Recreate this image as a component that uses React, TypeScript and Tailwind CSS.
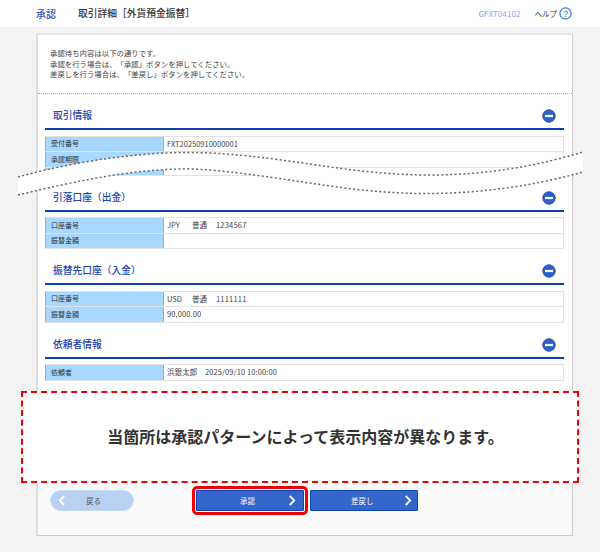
import React from "react";

const jp = "font-['Noto_Sans_CJK_JP','Noto_Sans',sans-serif] [text-spacing-trim:space-all]";

function Minus() {
  return (
    <svg width="14" height="14" viewBox="0 0 14 14" className="shrink-0 mt-[2px]">
      <circle cx="7" cy="7" r="6.2" fill="#2f62c4" stroke="#1a4dbb" strokeWidth="1" />
      <rect x="3" y="5.9" width="8" height="2.2" fill="#fff" />
    </svg>
  );
}

function Chevron({ left = false, color = "#fff" }: { left?: boolean; color?: string }) {
  return (
    <svg width="8" height="11" viewBox="0 0 8 11" className="shrink-0">
      <path d={left ? "M6.2 1 L1.8 5.5 L6.2 10" : "M1.8 1 L6.2 5.5 L1.8 10"} fill="none" stroke={color} strokeWidth="1.8" />
    </svg>
  );
}

function Account({ cur, no }: { cur: string; no: string }) {
  return (
    <>
      <span className="w-[25px]">{cur}</span>
      <span className="w-[24px]">普通</span>
      <span className="tracking-[0.2px]">{no}</span>
    </>
  );
}

function Row({ label, children }: { label: string; children?: React.ReactNode }) {
  return (
    <div className="flex h-[15.5px] border-t border-[#e2e2e2]">
      <div className="w-[118.5px] shrink-0 flex items-center bg-[#a9d8ff] border-l border-r border-[#7fb6e2] pl-[5px] pb-[1px] text-[7px] text-[#333]">
        {label}
      </div>
      <div className="flex-1 flex items-center pl-[3.5px] pb-[1px] text-[7.5px] text-[#444] whitespace-pre border-r border-[#e2e2e2]">
        {children}
      </div>
    </div>
  );
}

function Section({ title, clip = false, children }: { title: string; clip?: boolean; children: React.ReactNode }) {
  return (
    <section>
      <div className="h-[36px] pt-[8px] flex items-center justify-between border-b-2 border-[#0f3fb0] pl-[8px] pr-[8px]">
        <h2 className="text-[9.75px] font-medium text-[#1c46ae] leading-none pt-[2px]">{title}</h2>
        <Minus />
      </div>
      <div className={`mt-[5.5px] border-b border-[#e2e2e2] overflow-hidden ${clip ? "h-[40px]" : ""}`}>
        {children}
      </div>
    </section>
  );
}

export default function App() {
  return (
    <div className={`relative w-[600px] h-[552px] overflow-hidden bg-[#f3f3f3] ${jp}`}>
      <header className="h-[27px] bg-white flex items-center pl-[36px] pr-[28px]">
        <span className="w-[42px] text-[10px] font-medium text-[#2a56b8]">承認</span>
        <span className="text-[9.75px] font-medium text-[#333]">取引詳細［外貨預金振替］</span>
        <span className="ml-auto text-[8px] text-[#8aa8ea] tracking-[0.1px]">GFXT04102</span>
        <span className="ml-[14px] mr-[2px] text-[7.5px] text-[#333]">ヘルプ</span>
        <svg width="13" height="13" viewBox="0 0 13 13">
          <circle cx="6.5" cy="6.5" r="5.6" fill="#fff" stroke="#2a78dc" strokeWidth="1.1" />
          <text x="6.5" y="9.6" textAnchor="middle" fontSize="9" fill="#2a78dc" fontFamily="Liberation Sans, sans-serif">?</text>
        </svg>
      </header>

      <main className="mt-[6px] ml-[36px] w-[537px] bg-white border-t-2 border-l-2 border-t-[#e6e6e6] border-l-[#dddddd] border-r border-b border-r-[#cccccc] border-b-[#cccccc]">
        <div className="h-[59px] border-b border-dotted border-[#aaaaaa] pl-[12px] pt-[13px] text-[7.4px] leading-[10.5px] text-[#444]">
          <p>承認待ち内容は以下の通りです。</p>
          <p>承認を行う場合は、「承認」ボタンを押してください。</p>
          <p>差戻しを行う場合は、「差戻し」ボタンを押してください。</p>
        </div>

        <div className="pl-[7px] pr-[8px]">
          <Section title="取引情報" clip>
            <Row label="受付番号">FXT20250910000001</Row>
            <Row label="承認期限" />
            <Row label="" />
          </Section>
          <Section title="引落口座（出金）">
            <Row label="口座番号"><Account cur="JPY" no="1234567" /></Row>
            <Row label="振替金額" />
          </Section>
          <Section title="振替先口座（入金）">
            <Row label="口座番号"><Account cur="USD" no="1111111" /></Row>
            <Row label="振替金額"><span className="tracking-[0.1px]">90,000.00</span></Row>
          </Section>
          <Section title="依頼者情報">
            <Row label="依頼者"><span className="tracking-[0.1px]">浜銀太郎　2025/09/10 10:00:00</span></Row>
          </Section>
        </div>

        <div className="relative -ml-[17px] -mr-[7px] mt-[10px] h-[92px] bg-white border-2 border-dashed border-[#f00000] flex items-center justify-center">
          <p className="text-[16px] font-bold text-[#333] pb-[2px] pl-[11px]">当箇所は承認パターンによって表示内容が異なります。</p>
        </div>

        <footer className="bg-[#fafafa] h-[52px] pt-[7.5px] pl-[12px] flex items-start">
          <button className="w-[84px] h-[21px] rounded-full bg-[#b8d1f2] border border-[#c9ddf7] flex items-center pl-[7px] text-[7.5px] text-[#555]">
            <Chevron left />
            <span className="ml-[20px]">戻る</span>
          </button>
          <button className="ml-[62px] w-[108px] h-[21px] rounded-[1px] bg-[#3465c9] border border-[#0f43b8] outline-[3px] outline-solid outline-[#f00000] outline-offset-[1px] flex items-center pl-[43px] text-[7.5px] text-white">
            <span>承認</span>
            <span className="ml-[33px]"><Chevron /></span>
          </button>
          <button className="ml-[6px] w-[108px] h-[21px] rounded-[1px] bg-[#3465c9] border border-[#0f43b8] flex items-center pl-[40px] text-[7.5px] text-white">
            <span>差戻し</span>
            <span className="ml-[30px]"><Chevron /></span>
          </button>
        </footer>
      </main>

      <svg className="absolute left-0 top-0 pointer-events-none" width="600" height="552" viewBox="0 0 600 552">
        <path
          d="M18 177 C 80 160 150 150 210 153 C 290 157 350 175 430 175 C 490 175 540 165 583 152 L 583 172 C 540 184 490 193 430 193.500 C 350 194 290 177 210 170 C 150 165 80 180 18 195 Z"
          fill="#fff"
        />
        <path d="M18 177 C 80 160 150 150 210 153 C 290 157 350 175 430 175 C 490 175 540 165 583 152" fill="none" stroke="#666" strokeWidth="1.5" strokeDasharray="2 2.4" />
        <path d="M18 195 C 80 180 150 165 210 170 C 290 177 350 194 430 193.500 C 490 193 540 184 583 172" fill="none" stroke="#666" strokeWidth="1.5" strokeDasharray="2 2.4" />
      </svg>
    </div>
  );
}
